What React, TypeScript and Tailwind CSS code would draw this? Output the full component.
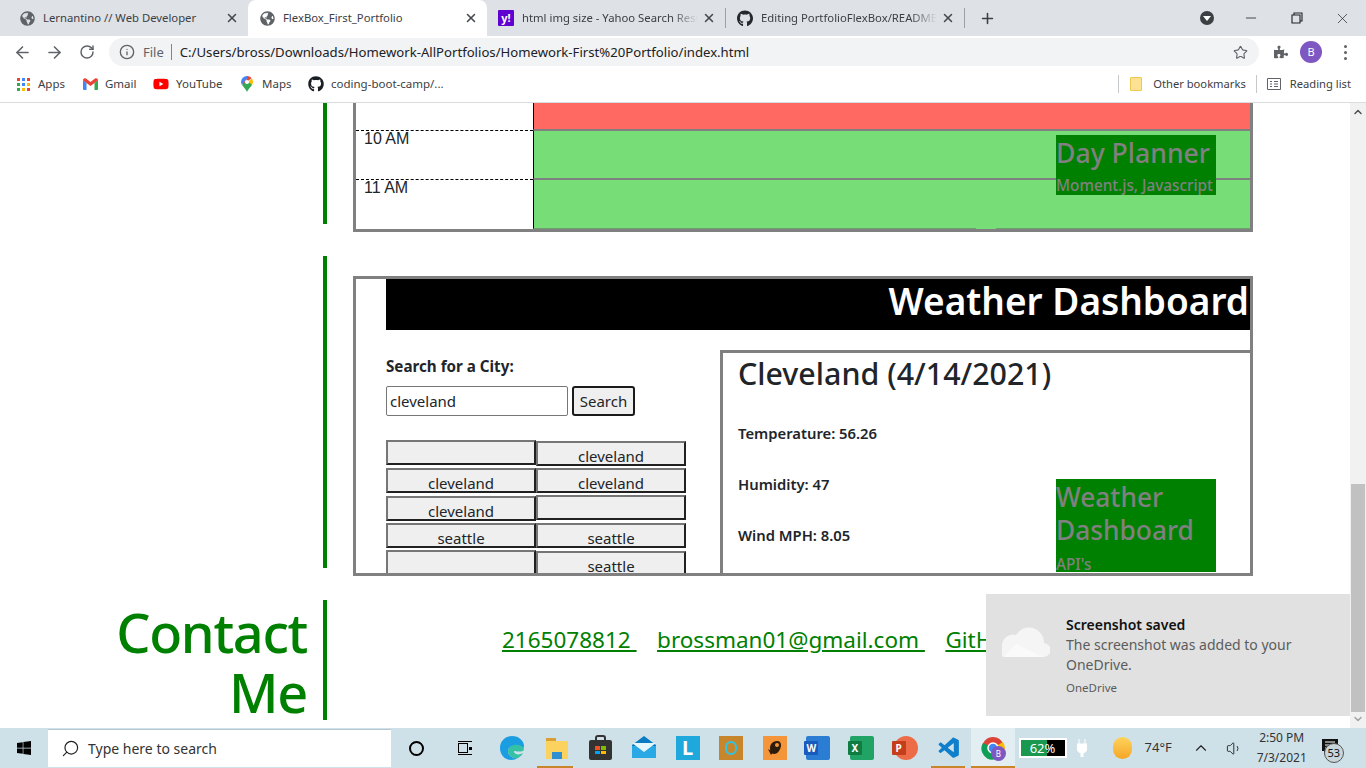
import { ArrowLeft, ArrowRight, RotateCw, Info, Star, X, Plus, Minus, Search, ChevronUp, Volume1, ChevronDown } from "lucide-react"
import { FaGithub, FaGlobeAmericas, FaPuzzlePiece, FaWindows, FaYoutube } from "react-icons/fa"
import { VscVscode } from "react-icons/vsc"

function Tab({ title, icon, active, fade, className }: { title: string; icon: React.ReactNode; active?: boolean; fade?: boolean; className: string }) {
  return (
    <div className={`flex items-center h-[36px] pl-[11px] pr-[9px] ${className} ${active ? "bg-white rounded-t-[8px]" : ""}`}>
      <div className="w-[16px] h-[16px] mr-[8px] shrink-0 flex items-center justify-center">{icon}</div>
      <span className={`flex-1 text-[11.300px] text-[#3c4043] whitespace-nowrap overflow-hidden ${fade ? "[mask-image:linear-gradient(to_right,black_85%,transparent)]" : ""}`}>{title}</span>
      <X size={14} strokeWidth={2.6} className="ml-[4px] shrink-0 text-[#45484c]" />
    </div>
  )
}

function Bookmark({ icon, label, className }: { icon: React.ReactNode; label: string; className: string }) {
  return (
    <div className={`flex items-center shrink-0 ${className}`}>
      <div className="w-[16px] h-[16px] mr-[7px] flex items-center justify-center shrink-0">{icon}</div>
      <span className="text-[11.500px] text-[#3c4043] whitespace-nowrap">{label}</span>
    </div>
  )
}

function AppsIcon() {
  const colors = ["bg-[#ea4335]", "bg-[#4285f4]", "bg-[#ea4335]", "bg-[#34a853]", "bg-[#4285f4]", "bg-[#fbbc04]", "bg-[#34a853]", "bg-[#fbbc04]", "bg-[#ea4335]"]
  return (
    <div className="grid grid-cols-3 gap-[2px]">
      {colors.map((c, i) => (
        <span key={i} className={`w-[3px] h-[3px] ${c}`} />
      ))}
    </div>
  )
}

function GmailIcon() {
  return (
    <svg width="15" height="12" viewBox="0 0 15 12">
      <path d="M0 2v9a1 1 0 0 0 1 1h2.5V5z" fill="#4285f4" />
      <path d="M15 2v9a1 1 0 0 1-1 1h-2.5V5z" fill="#34a853" />
      <path d="M0 2.2C0 .6 1.700-.4 3 .6l4.500 3.400L12 .6c1.300-1 3-.0 3 1.600L11.500 5 7.500 8 3.500 5z" fill="#ea4335" />
    </svg>
  )
}

function MapsIcon() {
  return (
    <svg width="12" height="16" viewBox="0 0 12 16">
      <path d="M6 0a6 6 0 0 0-6 6c0 1.200.5 2.200 1 3l5-6z" fill="#4285f4" />
      <path d="M6 0a6 6 0 0 1 4.500 2L3 9 1.500 7.500 6 3z" fill="#ea4335" />
      <path d="M10.500 2A6 6 0 0 1 12 6c0 1-.4 1.900-.9 2.800L6 8.500z" fill="#fbbc04" />
      <path d="M1 9c1.500 2.300 3.800 3.800 5 7 1-3 3.800-4.600 5.100-7.200L6 5z" fill="#34a853" />
      <circle cx="6" cy="6" r="2.100" fill="#fff" />
    </svg>
  )
}

function DayPlannerBox() {
  const rows = [
    { label: "", bg: "bg-[#ff6961]", h: "h-[27px]", edge: "border-b border-[#808080]", left: "" },
    { label: "10 AM", bg: "bg-[#77dd77]", h: "h-[49px]", edge: "border-y border-[#808080]", left: "border-t border-dashed border-black" },
    { label: "11 AM", bg: "bg-[#77dd77]", h: "h-[50px]", edge: "border-t border-b border-t-[#808080] border-b-[#6fa06f]", left: "border-t border-dashed border-black" },
  ]
  return (
    <div className="relative w-[900px] border-x-[3px] border-b-[3px] border-[#808080] bg-white">
      {rows.map((r) => (
        <div key={r.h} className={`flex ${r.h}`}>
          <div className={`w-[177px] pl-[8px] text-[16px] leading-[16px] text-[#212529] font-['Liberation_Sans',sans-serif] ${r.left}`}>{r.label}</div>
          <div className={`flex-1 border-l border-l-black ${r.bg} ${r.edge}`} />
        </div>
      ))}
      <span className="absolute left-[620px] bottom-0 w-[20px] h-[1px] bg-[#77dd77]" />
      <div className="absolute top-[32px] right-[34px] w-[160px] h-[60px] bg-[#008000] text-[#808080]">
        <div className="text-[26.600px] leading-[36px] font-medium whitespace-nowrap">Day Planner</div>
        <div className="text-[15.300px] leading-[19px] mt-[5px] font-medium whitespace-nowrap">Moment.js, Javascript</div>
      </div>
    </div>
  )
}

function CityButton({ label, className }: { label: string; className: string }) {
  return (
    <button className={`h-[25px] w-[150px] bg-[#efefef] border-2 border-t-[#767676] border-l-[#767676] border-r-[#212121] border-b-[#212121] text-[15px] leading-[21px] pt-[3px] text-[#212529] text-center ${className}`}>
      {label}
    </button>
  )
}

function WeatherBox() {
  const cities = [
    { label: "", className: "" },
    { label: "cleveland", className: "mt-[1px]" },
    { label: "cleveland", className: "" },
    { label: "cleveland", className: "" },
    { label: "cleveland", className: "mt-[1px]" },
    { label: "", className: "" },
    { label: "seattle", className: "" },
    { label: "seattle", className: "" },
    { label: "", className: "" },
    { label: "seattle", className: "mt-[1px]" },
  ]
  return (
    <div className="relative w-[900px] h-[300px] border-[3px] border-[#808080] bg-white overflow-hidden pl-[30px]">
      <div className="h-[51px] bg-black text-white text-right text-[37px] leading-[43px] font-semibold whitespace-nowrap pr-[1px]">Weather Dashboard</div>
      <div className="flex">
        <div className="w-[334px] pt-[24px]">
          <div className="text-[15.200px] leading-[24px] font-bold text-[#212529]">Search for a City:</div>
          <div className="flex gap-[4px] mt-[8px]">
            <input readOnly value="cleveland" className="w-[182px] h-[30px] border border-[#767676] rounded-[2px] px-[3px] text-[15px] text-[#212529] outline-none" />
            <button className="w-[63px] h-[30px] bg-[#efefef] border-2 border-[#1a1a1a] rounded-[3px] text-[15px] text-[#212529]">Search</button>
          </div>
          <div className="grid grid-cols-[150px_150px] auto-rows-[27.500px] mt-[24px]">
            {cities.map((c, i) => (
              <CityButton key={i} label={c.label} className={c.className} />
            ))}
          </div>
        </div>
        <div className="flex-1 mt-[20px] border-t-[3px] border-l-[3px] border-[#808080] pl-[15px] pt-[2px] text-[#212529]">
          <div className="text-[30.400px] leading-[38px] font-medium whitespace-nowrap">Cleveland (4/14/2021)</div>
          <div className="flex flex-col gap-[27px] mt-[28px] text-[14.800px] leading-[24px] font-semibold">
            <div>Temperature: 56.26</div>
            <div>Humidity: 47</div>
            <div>Wind MPH: 8.05</div>
          </div>
        </div>
      </div>
      <div className="absolute top-[200px] right-[34px] w-[160px] h-[93px] bg-[#008000] text-[#808080] pt-[2px]">
        <div className="text-[26.300px] leading-[33px] font-medium">Weather Dashboard</div>
        <div className="text-[15.300px] leading-[19px] font-medium mt-[8px]">API's</div>
      </div>
    </div>
  )
}

function Toast() {
  return (
    <div className="absolute left-[986px] top-[491px] w-[364px] h-[122px] bg-[#e0e1e0] flex">
      <div className="w-[80px] pl-[16px] pt-[32px]">
        <svg width="48" height="32" viewBox="0 0 48 32">
          <path d="M14 31h27a7 7 0 0 0 1-14 15 15 0 0 0-28-8 11 11 0 0 0-14 10 7 7 0 0 0 2 12z" fill="#f4f5f4" />
          <path d="M2 31l12-13 27 13z" fill="#fafafa" />
        </svg>
      </div>
      <div className="pt-[21px] text-[14px] leading-[20px] text-[#5c5c5c]">
        <div className="font-semibold text-[#111]">Screenshot saved</div>
        <div className="w-[260px]">The screenshot was added to your OneDrive.</div>
        <div className="text-[11.500px] leading-[16px] mt-[5px]">OneDrive</div>
      </div>
    </div>
  )
}

function TaskIcon({ children, className }: { children: React.ReactNode; className: string }) {
  return <div className={`relative h-full shrink-0 flex items-center justify-center ${className}`}>{children}</div>
}

function OfficeIcon({ letter, tile, dark }: { letter: string; tile: string; dark: string }) {
  return (
    <div className={`relative w-[24px] h-[24px] rounded-[2px] ${tile}`}>
      <span className={`absolute left-[-2px] top-[5px] w-[14px] h-[14px] rounded-[1px] text-white text-[10px] leading-[14px] font-bold text-center ${dark}`}>{letter}</span>
    </div>
  )
}

function Taskbar() {
  return (
    <div className="h-[40px] bg-[#cfe1e8] flex items-stretch">
      <div className="w-[48px] flex items-center justify-center">
        <FaWindows size={16} className="text-black" />
      </div>
      <div className="w-[343px] my-[1px] bg-white flex items-center pl-[13px] border-t border-[#b9c9cf]">
        <Search size={19} strokeWidth={1.5} className="text-[#222] -scale-x-100" />
        <span className="ml-[8px] text-[14px] text-[#333]">Type here to search</span>
      </div>
      <div className="w-[2px]" />
      <TaskIcon className="w-[47px]">
        <span className="w-[15px] h-[15px] rounded-full border-2 border-black" />
      </TaskIcon>
      <TaskIcon className="w-[49px]">
        <div className="flex flex-col items-center gap-[1px]">
          <span className="w-[14px] h-[1px] bg-black" />
          <span className="flex items-center gap-[1px]">
            <span className="w-[10px] h-[10px] border border-black" />
            <span className="w-[3px] h-[3px] bg-black" />
          </span>
          <span className="w-[14px] h-[1px] bg-black" />
        </div>
      </TaskIcon>
      <TaskIcon className="w-[46px]">
        <svg width="24" height="24" viewBox="0 0 24 24">
          <path d="M12 0C5 0 0 5 0 12c0 7 5 12 11 12 3 0 5-1 7-2-6 1-10-3-10-7 0-3 3-5 6-5 4 0 6 2 6 3 3 0 4-1 4-3C24 5 19 0 12 0z" fill="#1b9de2" />
          <path d="M24 13c0-1-3-5-10-4-3 .5-6 3-6 6 0 4 4 8 10 7 2-1 4-3 5-5-3 2-8 2-9-1 0-1 0-1 1-1 4 1 9 1 9-2z" fill="#35c1a5" />
        </svg>
      </TaskIcon>
      <TaskIcon className="w-[43.600px]">
        <div className="relative w-[22px] h-[21px]">
          <span className="absolute top-0 left-0 w-[10px] h-[4px] bg-[#d8a033]" />
          <span className="absolute top-[3px] left-0 w-[22px] h-[18px] bg-[#fbd25d]" />
          <span className="absolute bottom-0 left-[6px] w-[10px] h-[7px] bg-[#2f8fd0]" />
        </div>
        <span className="absolute bottom-0 left-[2px] w-[36px] h-[2px] bg-[#c9852a]" />
      </TaskIcon>
      <TaskIcon className="w-[43.600px]">
        <div className="relative w-[23px] h-[20px] mt-[4px] bg-[#333] rounded-[2px] grid grid-cols-2 gap-[1px] p-[6px]">
          <span className="bg-[#f25022]" />
          <span className="bg-[#7fba00]" />
          <span className="bg-[#00a4ef]" />
          <span className="bg-[#ffb900]" />
          <span className="absolute -top-[5px] left-[6px] w-[11px] h-[6px] border-2 border-b-0 border-[#333] rounded-t-[3px]" />
        </div>
      </TaskIcon>
      <TaskIcon className="w-[43.600px]">
        <svg width="24" height="24" viewBox="0 0 24 24">
          <path d="M0 9 12 0l12 9v13H0z" fill="#0a7cc4" />
          <path d="M0 10h24v12H0z" fill="#29a8e6" />
          <path d="M0 7h24l-12 9z" fill="#e6f6fd" />
        </svg>
      </TaskIcon>
      <TaskIcon className="w-[43.600px]">
        <div className="w-[24px] h-[24px] bg-[#1fa8dc] text-white text-[20px] leading-[24px] font-bold text-center">L</div>
      </TaskIcon>
      <TaskIcon className="w-[43.600px]">
        <div className="w-[24px] h-[24px] bg-[#c8862c] flex items-center justify-center">
          <span className="w-[12px] h-[14px] rounded-full border-2 border-[#2ec4e6]" />
        </div>
      </TaskIcon>
      <TaskIcon className="w-[43.600px]">
        <div className="w-[24px] h-[24px] bg-[#f5953a] flex items-center justify-center">
          <svg width="16" height="16" viewBox="0 0 16 16">
            <path d="M3 8c0-4 3-7 7-7 3 0 4 2 4 4 0 4-3 9-7 9-3 0-4-3-4-6z" fill="#2c1a0a" />
            <circle cx="10" cy="5" r="2" fill="#f5953a" />
            <path d="M1 9l5 3-2 3z" fill="#2c1a0a" />
          </svg>
        </div>
      </TaskIcon>
      <TaskIcon className="w-[43.600px]">
        <OfficeIcon letter="W" tile="bg-[#2b7cd3]" dark="bg-[#185abd]" />
      </TaskIcon>
      <TaskIcon className="w-[43.600px]">
        <OfficeIcon letter="X" tile="bg-[#21a366]" dark="bg-[#107c41]" />
      </TaskIcon>
      <TaskIcon className="w-[43.600px]">
        <div className="relative w-[24px] h-[24px] rounded-full bg-[#ed6c47]">
          <span className="absolute left-[-2px] top-[5px] w-[14px] h-[14px] rounded-[1px] bg-[#c43e1c] text-white text-[10px] leading-[14px] font-bold text-center">P</span>
        </div>
      </TaskIcon>
      <TaskIcon className="w-[43.600px]">
        <VscVscode size={25} className="text-[#0f7fcc]" />
        <span className="absolute bottom-0 left-[4px] w-[34px] h-[2px] bg-[#c9852a]" />
      </TaskIcon>
      <TaskIcon className="w-[43.600px] bg-[#e3eef2]">
        <div className="relative">
          <svg width="24" height="24" viewBox="0 0 24 24">
            <circle cx="12" cy="12" r="11" fill="#db4437" />
            <path d="M12 12 22 6a11 11 0 0 1-7 17z" fill="#fbbc04" />
            <path d="M12 12l3 11A11 11 0 0 1 2 7z" fill="#0f9d58" />
            <circle cx="12" cy="12" r="5" fill="#4285f4" stroke="#fff" strokeWidth="1.500" />
          </svg>
          <span className="absolute left-[10px] top-[10px] w-[15px] h-[15px] rounded-full bg-[#7e57c2] text-white text-[8px] leading-[15px] text-center">B</span>
        </div>
        <span className="absolute bottom-0 left-0 right-0 h-[2px] bg-[#c9852a]" />
      </TaskIcon>
      <div className="ml-[4px] flex items-center shrink-0">
        <div className="relative w-[48px] h-[20px] border-2 border-white bg-black flex">
          <span className="w-[26px] bg-[#1a9850]" />
          <span className="absolute inset-0 text-center text-white text-[13px] leading-[16px]">62%</span>
        </div>
        <svg width="10" height="18" viewBox="0 0 10 18" className="ml-[10px]">
          <path d="M2 0v5M8 0v5M0 5h10v5a5 5 0 0 1-4 4v4H4v-4a5 5 0 0 1-4-4z" stroke="#fff" strokeWidth="1" fill="#fff" />
        </svg>
        <span className="ml-[26px] w-[19px] h-[22px] rounded-full bg-gradient-to-b from-[#fdd35b] to-[#f5a623]" />
        <span className="ml-[13px] text-[13px] text-[#333]">74°F</span>
        <ChevronUp size={18} strokeWidth={1.5} className="ml-[20px] text-[#222]" />
        <Volume1 size={17} strokeWidth={1.3} className="ml-[16px] text-[#222]" />
      </div>
      <div className="ml-[2px] w-[74px] flex flex-col items-center justify-center text-[12px] leading-[20px] text-[#333]">
        <span>2:50 PM</span>
        <span>7/3/2021</span>
      </div>
      <div className="relative flex-1">
        <svg width="16" height="16" viewBox="0 0 16 16" className="absolute left-[3px] top-[11px]">
          <path d="M0 0h16v12H5l-3 4v-4H0z" fill="#111" />
          <path d="M3 3h10M3 6h10M3 9h7" stroke="#fff" strokeWidth="1" />
        </svg>
        <span className="absolute left-[5px] top-[15px] w-[20px] h-[20px] rounded-full bg-[#c8d6db] border border-[#555] text-[11px] leading-[18px] text-center text-[#111]">53</span>
      </div>
    </div>
  )
}

export default function App() {
  return (
    <div className="w-[1366px] h-[768px] overflow-hidden flex flex-col bg-white font-['Noto_Sans',sans-serif]">
      <div className="h-[36px] bg-[#dee1e6] flex items-center pl-[8px] shrink-0">
        <Tab title="Lernantino // Web Developer" className="w-[240px]" icon={<FaGlobeAmericas size={15} className="text-[#5f6368]" />} />
        <Tab title="FlexBox_First_Portfolio" className="w-[239px]" active icon={<FaGlobeAmericas size={15} className="text-[#5f6368]" />} />
        <Tab
          title="html img size - Yahoo Search Results"
          className="w-[238px]"
          fade
          icon={<span className="w-[16px] h-[16px] rounded-[1px] bg-[#5f01d1] text-white text-[11px] leading-[16px] font-bold text-center">y!</span>}
        />
        <span className="w-[1px] h-[20px] bg-[#9aa0a6]" />
        <Tab title="Editing PortfolioFlexBox/README.md" className="w-[238px]" fade icon={<FaGithub size={17} className="text-[#24292e]" />} />
        <span className="w-[1px] h-[20px] bg-[#9aa0a6]" />
        <Plus size={17} strokeWidth={2.2} className="ml-[14px] text-[#3c4043]" />
        <div className="flex-1" />
        <span className="w-[14px] h-[14px] rounded-full bg-[#3c4043] flex items-center justify-center mr-[29px]">
          <span className="border-x-[4px] border-x-transparent border-t-[5px] border-t-white" />
        </span>
        <Minus size={16} strokeWidth={1.2} className="mr-[32px] text-[#222]" />
        <svg width="12" height="12" viewBox="0 0 12 12" className="mr-[31px]">
          <path d="M3 3V1h8v8H9M1 3h8v8H1z" fill="none" stroke="#222" strokeWidth="1.100" />
        </svg>
        <X size={17} strokeWidth={1} className="mr-[15px] text-[#222]" />
      </div>

      <div className="h-[32px] flex items-center shrink-0">
        <ArrowLeft size={19} strokeWidth={2} className="ml-[13px] text-[#5f6368]" />
        <ArrowRight size={19} strokeWidth={2} className="ml-[13px] text-[#5f6368]" />
        <RotateCw size={16} strokeWidth={2.2} className="ml-[15px] text-[#5f6368]" />
        <div className="ml-[14px] w-[1150px] h-[28px] rounded-full bg-[#f1f3f4] flex items-center pl-[10px] pr-[10px]">
          <Info size={16} strokeWidth={2} className="text-[#5f6368]" />
          <span className="ml-[8px] pt-[1px] text-[13px] text-[#5f6368]">File</span>
          <span className="ml-[7px] w-[1px] h-[16px] bg-[#80868b]" />
          <span className="ml-[8px] pt-[1px] text-[13.150px] text-[#202124] flex-1 whitespace-nowrap">C:/Users/bross/Downloads/Homework-AllPortfolios/Homework-First%20Portfolio/index.html</span>
          <Star size={15} strokeWidth={1.800} className="text-[#5f6368] mr-[1px]" />
        </div>
        <FaPuzzlePiece size={14} className="ml-[15px] text-[#5f6368]" />
        <span className="ml-[12px] w-[22px] h-[22px] rounded-full bg-[#7e57c2] text-white text-[11px] leading-[22px] text-center">B</span>
        <div className="ml-[22px] flex flex-col gap-[3px]">
          <span className="w-[3px] h-[3px] rounded-full bg-[#5f6368]" />
          <span className="w-[3px] h-[3px] rounded-full bg-[#5f6368]" />
          <span className="w-[3px] h-[3px] rounded-full bg-[#5f6368]" />
        </div>
      </div>

      <div className="h-[35px] flex items-center shrink-0 border-b border-[#dadce0] pl-[15px] pb-[2px]">
        <Bookmark className="w-[67px]" icon={<AppsIcon />} label="Apps" />
        <Bookmark className="w-[71px]" icon={<GmailIcon />} label="Gmail" />
        <Bookmark className="w-[86px]" icon={<FaYoutube size={16} className="text-[#ff0000]" />} label="YouTube" />
        <Bookmark className="w-[69px]" icon={<MapsIcon />} label="Maps" />
        <Bookmark className="w-[150px]" icon={<FaGithub size={16} className="text-[#1b1f23]" />} label="coding-boot-camp/..." />
        <div className="flex-1" />
        <span className="w-[1px] h-[18px] bg-[#c6c9cc] mr-[11px]" />
        <span className="w-[12px] h-[14px] rounded-[1px] bg-[#fde293] border border-[#f2c84c] mr-[11px]" />
        <span className="text-[11.200px] text-[#3c4043] whitespace-nowrap">Other bookmarks</span>
        <span className="w-[1px] h-[18px] bg-[#c6c9cc] mx-[10px]" />
        <svg width="14" height="12" viewBox="0 0 14 12" className="mr-[9px]">
          <path d="M.5.5h13v11H.5zM3 3.500h2M3 6h2M3 8.500h2M7 3.500h4M7 6h4M7 8.500h4" fill="none" stroke="#5f6368" />
        </svg>
        <span className="text-[11.200px] text-[#3c4043] whitespace-nowrap mr-[15px]">Reading list</span>
      </div>

      <div className="relative flex h-[625px] shrink-0 overflow-hidden">
        <div className="flex-1 flex flex-col">
          <div className="ml-[323px] h-[121px] border-l-4 border-[#008000] pl-[26px] mb-[32px]">
            <DayPlannerBox />
          </div>
          <div className="ml-[323px] h-[312px] border-l-4 border-[#008000] pl-[26px] pt-[20px] mb-[32px]">
            <WeatherBox />
          </div>
          <div className="flex h-[120px] text-[#008000]">
            <div className="w-[323px] pl-[90px] pr-[16px] pt-[2px] text-right text-[54px] leading-[60px] tracking-[-1.300px] font-medium">Contact Me</div>
            <div className="border-l-4 border-[#008000] pl-[175px] pt-[23px] flex gap-[20.500px] text-[22.500px] leading-[34px] whitespace-pre">
              <a className="underline">2165078812 </a>
              <a className="underline">brossman01@gmail.com </a>
              <a className="underline">GitHub</a>
            </div>
          </div>
        </div>
        <div className="w-[16px] bg-[#f1f1f1] flex flex-col items-center shrink-0 relative z-10">
          <ChevronUp size={12} strokeWidth={3} className="text-[#505050] mt-[3px]" />
          <div className="flex-1" />
          <div className="w-[14px] h-[228px] bg-[#c1c1c1]" />
          <ChevronDown size={12} strokeWidth={3} className="text-[#a3a3a3] mt-[1px] mb-[3px]" />
        </div>
        <Toast />
      </div>

      <Taskbar />
    </div>
  )
}
